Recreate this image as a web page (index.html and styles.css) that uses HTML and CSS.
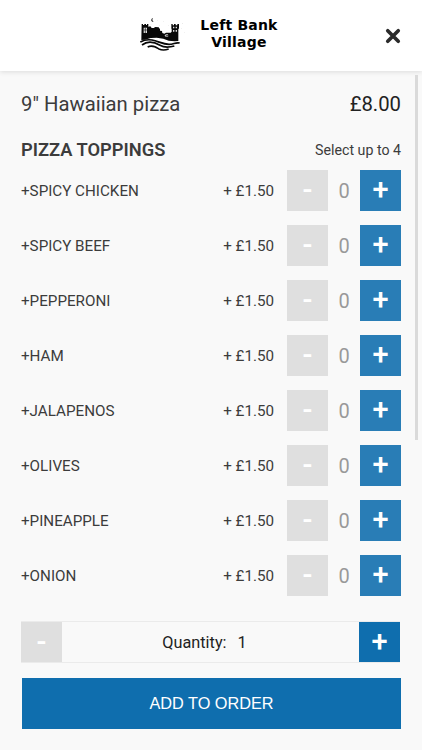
FILE: index.html
```html
<!DOCTYPE html>
<html lang="en">
<head>
<meta charset="utf-8">
<meta name="viewport" content="width=device-width, initial-scale=1">
<title>Left Bank Village</title>
<link rel="stylesheet" href="styles.css">
</head>
<body>
  <header class="header">
    <div class="logo">
      <svg class="logo-icon" viewBox="27 36 138 105" aria-hidden="true">
        <path d="M35 57H39V60H43V57H48V60H51V57H55V65L61 64L65 69H71L76 66L86 67L90 73V77L96 78L97 84L103 86L108 83H122L125 80V71H124V57H128V61H132V57H137V61H142V57H147V71H145V108L134 109L116 107L100 101L80 98L62 99L45 104L34 105Z"/>
        <path class="logo-wave" d="M31 106Q47 97 66 100C86 104 98 113 117 113C131 113 137 106 149 109"/>
        <path class="logo-wave" d="M36 115C54 101 73 106 90 116C106 125 119 122 133 118"/>
        <path class="logo-wave" d="M53 121C67 114 77 121 87 127C99 133 108 130 116 127"/>
        <path d="M69 39Q64 45 71 51Q63 50 64 44Q65 40 69 39Z"/>
        <path class="logo-cut" d="M41 68H51V84H41ZM129 65h4v5h-4zM137 65h4v5h-4zM129 75h4v5h-4zM137 75h4v5h-4zM104 91l5-4 6 1-3 3 4 2-6 3-5-2z"/>
        <path class="logo-line" d="M41 75H51M46 68V84M107 90l6 1-5 3"/>
        <path class="logo-specks" d="M62 57h2v1h-2zM82 47h2v1h-2zM100 50h2v1h-2zM88 60h2v1h-2zM114 62h2v1h-2zM153 69h2v1h-2zM163 83h2v1h-2zM158 54h1v2h-1zM42 47h1v1h-1z"/>
      </svg>
      <div class="logo-text">Left Bank<br>Village</div>
    </div>
    <button class="close" aria-label="Close">
      <svg viewBox="0 0 14 14"><path d="M2.4 2.4l9.2 9.2M11.6 2.4l-9.2 9.2"/></svg>
    </button>
  </header>

  <main class="content">
    <div class="item-title">
      <span>9" Hawaiian pizza</span>
      <span class="item-price">£8.00</span>
    </div>
    <div class="group-title">
      <h2>PIZZA TOPPINGS</h2>
      <span>Select up to 4</span>
    </div>

    <ul class="toppings">
      <li class="topping">
        <span class="name">+SPICY CHICKEN</span><span class="price">+ £1.50</span>
        <button class="step minus" disabled>-</button><span class="count">0</span><button class="step plus">+</button>
      </li>
      <li class="topping">
        <span class="name">+SPICY BEEF</span><span class="price">+ £1.50</span>
        <button class="step minus" disabled>-</button><span class="count">0</span><button class="step plus">+</button>
      </li>
      <li class="topping">
        <span class="name">+PEPPERONI</span><span class="price">+ £1.50</span>
        <button class="step minus" disabled>-</button><span class="count">0</span><button class="step plus">+</button>
      </li>
      <li class="topping">
        <span class="name">+HAM</span><span class="price">+ £1.50</span>
        <button class="step minus" disabled>-</button><span class="count">0</span><button class="step plus">+</button>
      </li>
      <li class="topping">
        <span class="name">+JALAPENOS</span><span class="price">+ £1.50</span>
        <button class="step minus" disabled>-</button><span class="count">0</span><button class="step plus">+</button>
      </li>
      <li class="topping">
        <span class="name">+OLIVES</span><span class="price">+ £1.50</span>
        <button class="step minus" disabled>-</button><span class="count">0</span><button class="step plus">+</button>
      </li>
      <li class="topping">
        <span class="name">+PINEAPPLE</span><span class="price">+ £1.50</span>
        <button class="step minus" disabled>-</button><span class="count">0</span><button class="step plus">+</button>
      </li>
      <li class="topping">
        <span class="name">+ONION</span><span class="price">+ £1.50</span>
        <button class="step minus" disabled>-</button><span class="count">0</span><button class="step plus">+</button>
      </li>
    </ul>

    <div class="quantity">
      <button class="step minus" disabled>-</button>
      <div class="quantity-label">Quantity: <span>1</span></div>
      <button class="step plus">+</button>
    </div>
    <button class="add">ADD TO ORDER</button>
    <div class="scrollbar"></div>
  </main>
</body>
</html>
```
FILE: styles.css
```css
* {
  box-sizing: border-box;
}

body {
  margin: 0;
  height: 750px;
  overflow: hidden;
  background-color: #f9f9f9;
  color: #3c3c3c;
  font-family: Roboto, "Liberation Sans", sans-serif;
}

button {
  border: none;
  padding: 0;
  cursor: pointer;
}

.header {
  height: 71px;
  padding: 0 21px 0 139px;
  display: flex;
  justify-content: space-between;
  background-color: #fff;
  box-shadow: 0 1px 5px rgba(0, 0, 0, 0.12);
}

.logo {
  display: flex;
  align-items: flex-start;
}

.logo-icon {
  width: 46px;
  height: 35px;
  margin-top: 17px;
  fill: #080808;
}

.logo-icon .logo-wave {
  fill: none;
  stroke: #080808;
  stroke-width: 5;
  transform: translateY(5px);
}

.logo-icon .logo-cut {
  fill: #ddd;
}

.logo-icon .logo-line {
  fill: none;
  stroke: #111;
  stroke-width: 2;
}

.logo-icon .logo-specks {
  fill: #aaa;
}

.logo-text {
  width: 80px;
  margin: 17px 0 0 14px;
  color: #000;
  font: bold 14px/17px "DejaVu Sans", sans-serif;
  letter-spacing: 0.2px;
  text-align: center;
  white-space: nowrap;
}

.close {
  width: 16px;
  height: 16px;
  margin-top: 28px;
  background: none;
}

.close svg {
  display: block;
  width: 16px;
  height: 16px;
  fill: none;
  stroke: #2b2b2b;
  stroke-width: 3.2;
  stroke-linecap: round;
}

.content {
  position: relative;
  padding: 20px 21px 0;
}

.item-title,
.group-title {
  display: flex;
  justify-content: space-between;
  align-items: center;
}

.item-title {
  height: 26px;
  font-size: 20.3px;
}

.item-price {
  color: #222;
}

.group-title {
  height: 26px;
  margin-top: 20px;
  font-size: 14.2px;
}

.group-title h2 {
  margin: 0;
  padding-bottom: 2px;
  font-size: 18.3px;
  font-weight: 600;
}

.toppings {
  display: flex;
  flex-direction: column;
  gap: 14px;
  margin: 7px 0 0;
  padding: 0;
  list-style: none;
}

.topping {
  display: flex;
  align-items: center;
  height: 41px;
  font-size: 15.2px;
}

.topping .price {
  margin: 0 13px 0 auto;
}

.count {
  width: 32px;
  padding-top: 1px;
  color: #999;
  font-size: 20px;
  text-align: center;
}

.step {
  width: 41px;
  height: 41px;
  padding-bottom: 1px;
  color: #fff;
  font: 500 29px/38px Roboto, sans-serif;
}

.plus {
  padding-bottom: 3px;
}

.minus {
  background-color: #dfdfdf;
}

.topping .plus {
  background-color: #297db6;
}

.quantity {
  display: flex;
  height: 42px;
  margin: 25px 1px 0 0;
  border: 1px solid #ebebeb;
  border-width: 1px 0;
}

.quantity .step {
  height: 40px;
}

.quantity .plus {
  background-color: #0f6eae;
}

.quantity-label {
  flex: 1;
  padding-right: 12px;
  color: #222;
  font-size: 16.3px;
  line-height: 41px;
  text-align: center;
}

.quantity-label span {
  margin-left: 7px;
}

.add {
  display: block;
  width: 379px;
  height: 51px;
  margin: 15px 0 0 1px;
  padding-bottom: 1px;
  background-color: #0f6eae;
  color: #fff;
  font: 16.3px "Liberation Sans", Arial, sans-serif;
}

/* scroll thumb sits over the right edge of the list */
.scrollbar {
  position: absolute;
  top: 4px;
  right: 4px;
  width: 3px;
  height: 365px;
  background-color: #dadada;
}
```
